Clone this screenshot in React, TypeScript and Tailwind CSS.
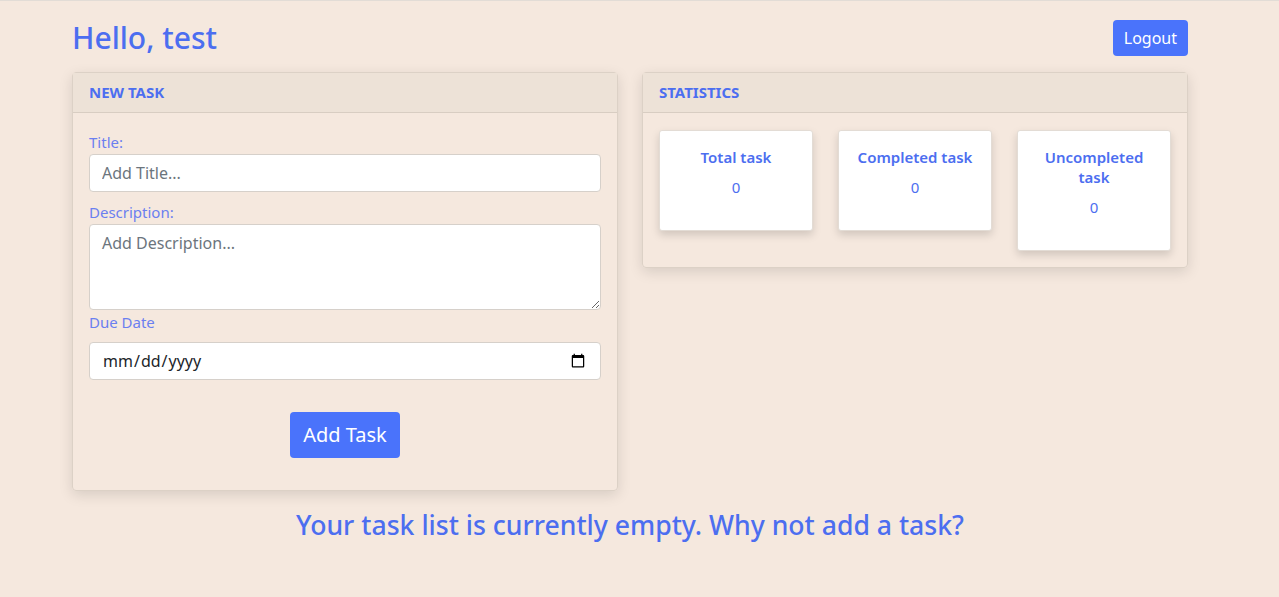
import { useState } from 'react';

const FONT = { fontFamily: '"Segoe UI", "Noto Sans", sans-serif' };

function StatBox({ label, value }: { label: string; value: number }) {
  return (
    <div className="flex w-[154px] flex-col items-center self-start rounded-[3px] border border-[#e3dcd5] bg-white px-4 pt-[16px] pb-[33px] text-center shadow-[0_4px_8px_rgba(0,0,0,0.15)]">
      <div className="text-[15px] font-semibold leading-[20px] text-[#4c6ef0]">{label}</div>
      <div className="mt-[10px] text-[15px] leading-[20px] text-[#4c6ef0]">{value}</div>
    </div>
  );
}

export default function App() {
  const [title, setTitle] = useState('');
  const [desc, setDesc] = useState('');
  const [due, setDue] = useState('');

  return (
    <div className="min-h-[597px] border-t border-[#e2dcd6] bg-[#f5e8de]" style={FONT}>
      <div className="ml-[72px] w-[1116px]">
        <div className="flex items-center justify-between pt-[18px] pb-[15px]">
          <h1 className="text-[30px] font-medium leading-[38px] text-[#4c6ef0]">Hello, test</h1>
          <button className="h-[36px] rounded-[4px] bg-[#4a73fb] px-[11px] text-[16px] text-white">Logout</button>
        </div>

        <div className="flex gap-6">
          <div className="w-[546px] self-start rounded-[4px] border border-[#dcd1c6] shadow-[0_4px_14px_rgba(0,0,0,0.12)]">
            <div className="flex h-[40px] items-center border-b border-[#d8cdc2] bg-[#ede2d7] px-4">
              <span className="text-[15px] font-bold text-[#4c6ef0]">NEW TASK</span>
            </div>
            <div className="flex flex-col px-4 pt-[18px] pb-[32px]">
              <label className="text-[15px] leading-[22px] text-[#6b7ff0]">Title:</label>
              <input
                value={title}
                onChange={(e) => setTitle(e.target.value)}
                placeholder="Add Title..."
                className="mt-[1px] h-[38px] rounded-[4px] border border-[#d6d0ca] bg-white px-3 text-[16px] text-[#212529] placeholder:text-[#6c757d] outline-none"
              />
              <label className="mt-[9px] text-[15px] leading-[22px] text-[#6b7ff0]">Description:</label>
              <textarea
                value={desc}
                onChange={(e) => setDesc(e.target.value)}
                placeholder="Add Description..."
                className="mt-[1px] h-[86px] rounded-[4px] border border-[#d6d0ca] bg-white px-3 py-[6px] text-[16px] text-[#212529] placeholder:text-[#6c757d] outline-none"
              />
              <label className="mt-[1px] mb-[9px] text-[15px] leading-[22px] text-[#6b7ff0]">Due Date</label>
              <input
                type="date"
                value={due}
                onChange={(e) => setDue(e.target.value)}
                className="h-[38px] rounded-[4px] border border-[#d6d0ca] bg-white px-3 text-[16px] text-[#212529] outline-none"
              />
              <div className="mt-[32px] flex justify-center">
                <button className="h-[46px] rounded-[4px] bg-[#4a73fb] px-[13px] text-[20px] text-white">Add Task</button>
              </div>
            </div>
          </div>

          <div className="w-[546px] self-start rounded-[4px] border border-[#dcd1c6] shadow-[0_4px_14px_rgba(0,0,0,0.12)]">
            <div className="flex h-[40px] items-center border-b border-[#d8cdc2] bg-[#ede2d7] px-4">
              <span className="text-[15px] font-bold text-[#4c6ef0]">STATISTICS</span>
            </div>
            <div className="flex justify-between px-4 pt-[17px] pb-[16px]">
              <StatBox label="Total task" value={0} />
              <StatBox label="Completed task" value={0} />
              <StatBox label="Uncompleted task" value={0} />
            </div>
          </div>
        </div>

        <h3 className="mt-[16px] text-center text-[26.6px] font-medium leading-[36px] text-[#4c6ef0]">
          Your task list is currently empty. Why not add a task?
        </h3>
      </div>
    </div>
  );
}
